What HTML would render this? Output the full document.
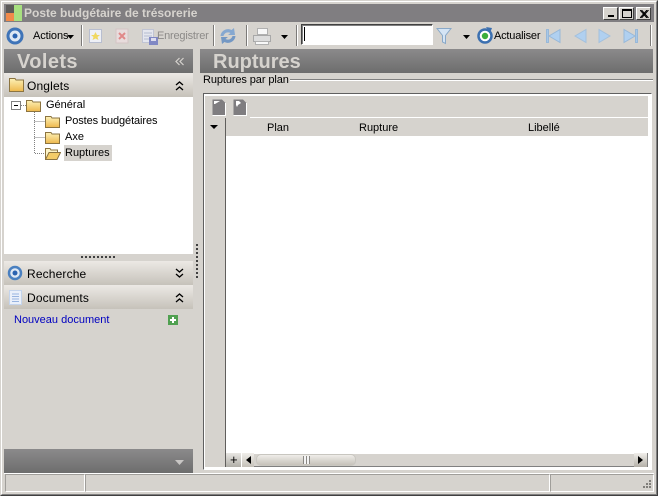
<!DOCTYPE html>
<html><head><meta charset="utf-8"><style>
html,body{margin:0;padding:0}
body{width:658px;height:496px;overflow:hidden;position:relative;background:#d6d3ce;font-family:"Liberation Sans",sans-serif;font-size:11px;color:#000}
div,span,svg{position:absolute;box-sizing:border-box}
.t{white-space:nowrap;line-height:13px}
.sep{width:1px;top:25px;height:21px;background:#7c7a78;box-shadow:1px 0 #fff}
.hd{background:linear-gradient(#8b8a8b,#6d6d6d)}
.big{font-weight:bold;font-size:20px;color:#d6d3ce;line-height:24px;white-space:nowrap}
.sec{left:4px;width:189px;height:24px;background:linear-gradient(#ece9e5,#c6c2ba)}
.sec .t{font-size:12px;left:27px;top:7px;letter-spacing:.15px;left:23px}
.btn{top:7px;height:13px;width:15px;background:#d6d3ce;border:1px solid;border-color:#fff #404040 #404040 #fff}
</style></head><body>
<svg width="0" height="0" style="left:0;top:0"><defs><linearGradient id="f" x1="0" y1="0" x2="0" y2="1"><stop offset="0" stop-color="#fdf2b8"/><stop offset="1" stop-color="#eeb84c"/></linearGradient></defs></svg>
<!-- outer frame -->
<div style="left:0;top:0;width:658px;height:496px;border:1px solid #d6d3ce;border-right-color:#404040;border-bottom-color:#404040"></div>
<div style="left:1px;top:1px;width:656px;height:494px;border:1px solid #fff;border-right-color:#808080;border-bottom-color:#808080"></div>
<!-- title -->
<div style="left:4px;top:4px;width:650px;height:18px;background:#807e81"></div>
<div style="left:6px;top:5px;width:8px;height:8px;background:#5c5a58"></div>
<div style="left:6px;top:13px;width:8px;height:8px;background:#f08a4a"></div>
<div style="left:14px;top:5px;width:8px;height:16px;background:#a8e080"></div>
<div class="t" style="left:24px;top:7px;font-weight:bold;font-size:12px;color:#d6d3ce">Poste budgétaire de trésorerie</div>
<div class="btn" style="left:603px"><span style="left:4px;top:7px;width:6px;height:2px;background:#000"></span></div>
<div class="btn" style="left:619px"><span style="left:2px;top:1px;width:10px;height:9px;border:1px solid #000;border-top-width:2px"></span></div>
<div class="btn" style="left:636px"><svg style="left:3px;top:2px" width="9" height="8"><path d="M0 0L7 8M1.500 0L8.500 8M7 0L0 8M8.500 0L1.500 8" stroke="#000" stroke-width="1"/></svg></div>
<!-- toolbar -->
<svg style="left:6px;top:27px" width="18" height="18"><circle cx="9" cy="9" r="7" fill="#dfe8f4" stroke="#3f74b8" stroke-width="3"/><circle cx="9" cy="9" r="2.500" fill="#2a62b0"/></svg>
<div class="t" style="left:33px;top:30px;letter-spacing:-.1px">Actions</div>
<svg style="left:67px;top:35px" width="7" height="4"><path d="M0 0H7L3.500 4Z" fill="#000"/></svg>
<div class="sep" style="left:81px"></div>
<svg style="left:88px;top:28px" width="15" height="16"><rect x="1.500" y="1.500" width="12" height="13" fill="#eef0f6" stroke="#b8bed0"/><path d="M7.500 4L9 7H12L9.500 9L10.500 12L7.500 10.500L4.500 12L5.500 9L3 7H6Z" fill="#f0d860"/></svg>
<svg style="left:115px;top:28px" width="14" height="16"><rect x="1" y="1" width="12" height="14" fill="#e8dcdc" stroke="#d4c4c4"/><path d="M4 5L10 11M10 5L4 11" stroke="#e08888" stroke-width="2"/></svg>
<svg style="left:141px;top:28px" width="18" height="18"><rect x="1.500" y="1.500" width="11" height="13" fill="#e4e6ee" stroke="#c0c4d4"/><path d="M3 5H11M3 8H11M3 11H8" stroke="#b4bcd0"/><rect x="8" y="9" width="9" height="8" fill="#8088c4"/><rect x="10" y="10" width="5" height="3" fill="#dde"/></svg>
<div class="t" style="left:157px;top:30px;color:#8c8a88;letter-spacing:-.2px">Enregistrer</div>
<div class="sep" style="left:213px"></div>
<svg style="left:219px;top:27px" width="18" height="18"><path d="M1.500 9C2 3.500 8 0.500 12.500 3L15 1L16 8L9 8L11.500 6C8 4.500 5.500 6 4.500 9Z" fill="#86a8d0"/><path d="M16.500 9C16 14.500 10 17.500 5.500 15L3 17L2 10L9 10L6.500 12C10 13.500 12.500 12 13.500 9Z" fill="#7498c4"/></svg>
<div class="sep" style="left:246px"></div>
<svg style="left:252px;top:27px" width="20" height="19"><rect x="5.500" y="1.500" width="10" height="6" fill="#f8f8f8" stroke="#b0b0b0"/><path d="M1.500 8.500H18.500V14.500H1.500Z" fill="#dcdcdc" stroke="#a8a8a8"/><rect x="3.500" y="14.500" width="13" height="3" fill="#f8f8f8" stroke="#b0b0b0"/></svg>
<svg style="left:281px;top:35px" width="7" height="4"><path d="M0 0H7L3.500 4Z" fill="#000"/></svg>
<div class="sep" style="left:296px"></div>
<div style="left:301px;top:24px;width:132px;height:21px;background:#fff;border:1px solid;border-color:#404040 #fff #fff #404040;box-shadow:inset 1px 1px #808080"></div>
<div style="left:304px;top:27px;width:1px;height:14px;background:#000"></div>
<svg style="left:436px;top:27px" width="16" height="18"><path d="M1 1.500H15L9.500 8.500V16.500L6.500 15V8.500Z" fill="#d4e4f4" stroke="#88a8c8"/></svg>
<svg style="left:463px;top:35px" width="7" height="4"><path d="M0 0H7L3.500 4Z" fill="#000"/></svg>
<svg style="left:476px;top:27px" width="18" height="18"><circle cx="9" cy="9" r="6.500" fill="#fff" stroke="#3c70b0" stroke-width="2.500"/><circle cx="9" cy="9" r="3.200" fill="#3cae3c"/><path d="M10 0L16 1L14 6Z" fill="#3c70b0"/></svg>
<div class="t" style="left:494px;top:30px;letter-spacing:-.2px">Actualiser</div>
<svg style="left:545px;top:28px" width="16" height="16"><path d="M1.500 1.500H3.500V14.500H1.500Z" fill="#a8c8e8" stroke="#98b8d8"/><path d="M15 1.500V14.500L4 8Z" fill="#b0d0f0" stroke="#98b8d8"/></svg>
<svg style="left:573px;top:28px" width="14" height="16"><path d="M13 1.500V14.500L2 8Z" fill="#b0d0f0" stroke="#a4c0dc"/></svg>
<svg style="left:598px;top:28px" width="14" height="16"><path d="M1 1.500V14.500L12 8Z" fill="#b0d0f0" stroke="#a4c0dc"/></svg>
<svg style="left:623px;top:28px" width="16" height="16"><path d="M1 1.500V14.500L12 8Z" fill="#b0d0f0" stroke="#98b8d8"/><path d="M12.500 1.500H14.500V14.500H12.500Z" fill="#a8c8e8" stroke="#98b8d8"/></svg>
<div class="sep" style="left:650px"></div>
<!-- headers -->
<div class="hd" style="left:4px;top:49px;width:189px;height:24px"></div>
<div class="big" style="left:17px;top:50px;letter-spacing:.4px">Volets</div>
<svg style="left:175px;top:57px" width="10" height="9"><path d="M4.500 1L1 4.500L4.500 8M8.500 1L5 4.500L8.500 8" fill="none" stroke="#d6d3ce" stroke-width="1.200"/></svg>
<div class="hd" style="left:200px;top:49px;width:453px;height:24px"></div>
<div class="big" style="left:213px;top:50px">Ruptures</div>
<!-- left panel -->
<div class="sec" style="top:73px"><span class="t">Onglets</span></div>
<svg style="left:9px;top:78px" width="15" height="14"><path d="M0.500 0.500H6L7 2H14.500V13.500H0.500Z" fill="url(#f)" stroke="#8c7440"/></svg>
<svg style="left:175px;top:81px" width="9" height="10"><path d="M1 4L4.500 1L8 4M1 9L4.500 6L8 9" fill="none" stroke="#000" stroke-width="1.300"/></svg>
<div style="left:4px;top:97px;width:189px;height:157px;background:#fff"></div>
<!-- tree -->
<div style="left:11px;top:101px;width:10px;height:9px;border:1px solid #808080;background:#fff"><span style="left:2px;top:3px;width:4px;height:1px;background:#000"></span></div>
<svg style="left:21px;top:100px" width="40" height="64"><path d="M0 5.500H5M13.500 10V53.500H24M13.500 21.500H24M13.500 37.500H24" stroke="#808080" stroke-dasharray="1 1" fill="none"/></svg>
<svg style="left:26px;top:100px" width="15" height="12"><path d="M0.500 0.500H6L7 2H14.500V11.500H0.500Z" fill="url(#f)" stroke="#8c7440"/></svg>
<div class="t" style="left:46px;top:99px">Général</div>
<svg style="left:45px;top:116px" width="15" height="12"><path d="M0.500 0.500H6L7 2H14.500V11.500H0.500Z" fill="url(#f)" stroke="#8c7440"/></svg>
<div class="t" style="left:65px;top:115px;letter-spacing:-.1px">Postes budgétaires</div>
<svg style="left:45px;top:132px" width="15" height="12"><path d="M0.500 0.500H6L7 2H14.500V11.500H0.500Z" fill="url(#f)" stroke="#8c7440"/></svg>
<div class="t" style="left:65px;top:131px">Axe</div>
<div style="left:64px;top:145px;width:48px;height:16px;background:#d6d3ce"></div>
<svg style="left:45px;top:148px" width="16" height="12"><path d="M0.500 11.500V0.500H5L6 2H12.500V4.500" fill="#fdf4c8" stroke="#8c7440"/><path d="M0.500 11.500L4 4.500H15.500L12 11.500Z" fill="#f4cc68" stroke="#8c7440"/></svg>
<div class="t" style="left:65px;top:147px">Ruptures</div>
<!-- splitter -->
<div style="left:81px;top:256px;width:36px;height:2px;background:repeating-linear-gradient(90deg,#404040 0 2px,transparent 2px 4px)"></div>
<div class="sec" style="top:261px"><span class="t">Recherche</span></div>
<svg style="left:7px;top:265px" width="16" height="16"><circle cx="8" cy="8" r="6" fill="#dfe8f4" stroke="#4a80c0" stroke-width="2.500"/><circle cx="8" cy="8" r="2.500" fill="#2a62b0"/></svg>
<svg style="left:175px;top:268px" width="9" height="10"><path d="M1 1L4.500 4L8 1M1 6L4.500 9L8 6" fill="none" stroke="#000" stroke-width="1.300"/></svg>
<div class="sec" style="top:285px"><span class="t">Documents</span></div>
<svg style="left:9px;top:290px" width="13" height="15"><rect x="0.500" y="0.500" width="12" height="14" fill="#eaf0fa" stroke="#c4d4ec"/><path d="M3 4H10M3 6.500H10M3 9H10M3 11.500H10" stroke="#98b4e0"/></svg>
<svg style="left:175px;top:293px" width="9" height="10"><path d="M1 4L4.500 1L8 4M1 9L4.500 6L8 9" fill="none" stroke="#000" stroke-width="1.300"/></svg>
<div class="t" style="left:14px;top:314px;color:#0000c0;font-size:11px">Nouveau document</div>
<div style="left:168px;top:315px;width:10px;height:10px;background:#50a050"><span style="left:4px;top:2px;width:2px;height:6px;background:#fff"></span><span style="left:2px;top:4px;width:6px;height:2px;background:#fff"></span></div>
<div class="hd" style="left:4px;top:449px;width:189px;height:24px"></div>
<svg style="left:175px;top:460px" width="9" height="5"><path d="M0 0H9L4.500 5Z" fill="#c8c6c4"/></svg>
<!-- vertical splitter -->
<div style="left:196px;top:244px;width:2px;height:36px;background:repeating-linear-gradient(#404040 0 2px,transparent 2px 4px)"></div>
<!-- right -->
<div class="t" style="left:203px;top:74px;letter-spacing:-.1px">Ruptures par plan</div>
<div style="left:290px;top:79px;width:363px;height:1px;background:#808080;box-shadow:0 1px #fff"></div>
<div style="left:203px;top:93px;width:449px;height:377px;border:1px solid;border-color:#606060 transparent transparent #606060;background:#fff"></div>
<div style="left:205px;top:96px;width:443px;height:21px;background:#d6d3ce"></div>
<div style="left:250px;top:117px;width:398px;height:1px;background:#fff"></div>
<div style="left:205px;top:117px;width:45px;height:1px;background:#d6d3ce"></div>
<svg style="left:212px;top:99px" width="14" height="17"><path d="M0.500 16.500V0.500H10L13.500 4V16.500Z" fill="#7f7d80"/><path d="M13.500 4V16.500H0.500" fill="none" stroke="#fff"/><path d="M2 2H8L3 5H2Z" fill="#fff"/></svg>
<svg style="left:233px;top:99px" width="14" height="17"><path d="M0.500 16.500V0.500H10L13.500 4V16.500Z" fill="#7f7d80"/><path d="M13.500 4V16.500H0.500" fill="none" stroke="#fff"/><path d="M3 2H6L8 4L5 6L4 8L3 6Z" fill="#fff"/></svg>
<div style="left:206px;top:118px;width:442px;height:18px;background:#d6d3ce"></div>
<div style="left:205px;top:118px;width:1px;height:349px;background:#d6d3ce"></div>
<div style="left:206px;top:136px;width:20px;height:331px;background:#d6d3ce"></div>
<div style="left:225px;top:118px;width:1px;height:349px;background:#605e5c"></div>
<div style="left:226px;top:136px;width:422px;height:317px;background:#fff"></div>
<svg style="left:210px;top:125px" width="8" height="4"><path d="M0 0H8L4 4Z" fill="#000"/></svg>
<div class="t" style="left:267px;top:122px">Plan</div>
<div class="t" style="left:359px;top:122px">Rupture</div>
<div class="t" style="left:528px;top:122px">Libellé</div>
<!-- scrollbars -->
<div style="left:226px;top:453px;width:15px;height:14px;background:linear-gradient(#e8e6e2,#b0aea8)"></div>
<div class="t" style="left:230px;top:453px;font-size:13px;line-height:14px">+</div>
<div style="left:241px;top:453px;width:407px;height:14px;background:#d6d3ce;border-top:1px solid #fff;border-bottom:1px solid #808080"></div>
<div style="left:241px;top:453px;width:13px;height:14px;background:linear-gradient(#f0eeea,#c4c0b8);border-left:1px solid #fff"></div>
<svg style="left:246px;top:456px" width="5" height="8"><path d="M5 0V8L0 4Z" fill="#000"/></svg>
<div style="left:256px;top:454px;width:100px;height:12px;border-radius:5px;background:linear-gradient(#efede9,#c6c2ba);border:1px solid #c8c6c0"></div>
<div style="left:303px;top:456px;width:7px;height:8px;background:repeating-linear-gradient(90deg,#8a8884 0 1px,#f4f4f4 1px 3px)"></div>
<div style="left:634px;top:453px;width:14px;height:14px;background:linear-gradient(#f0eeea,#b4b0a8);border-right:1px solid #808080"></div>
<svg style="left:638px;top:456px" width="5" height="8"><path d="M0 0V8L5 4Z" fill="#000"/></svg>
<!-- status -->
<div style="left:4px;top:473px;width:650px;height:19px;border-top:1px solid #fff;background:#d6d3ce"></div>
<div style="left:5px;top:474px;width:80px;height:18px;border:1px solid;border-color:#a09e9a #fff #fff #a09e9a"></div>
<div style="left:85px;top:474px;width:465px;height:18px;border:1px solid;border-color:#a09e9a #fff #fff #a09e9a"></div>
<div style="left:550px;top:474px;width:104px;height:18px;border:1px solid;border-color:#a09e9a #fff #fff #a09e9a"></div>
<svg style="left:640px;top:479px" width="12" height="12"><path d="M9 1h2v2H9zM6 4h2v2H6zM9 4h2v2H9zM3 7h2v2H3zM6 7h2v2H6zM9 7h2v2H9z" fill="#807e7a"/></svg>
</body></html>
